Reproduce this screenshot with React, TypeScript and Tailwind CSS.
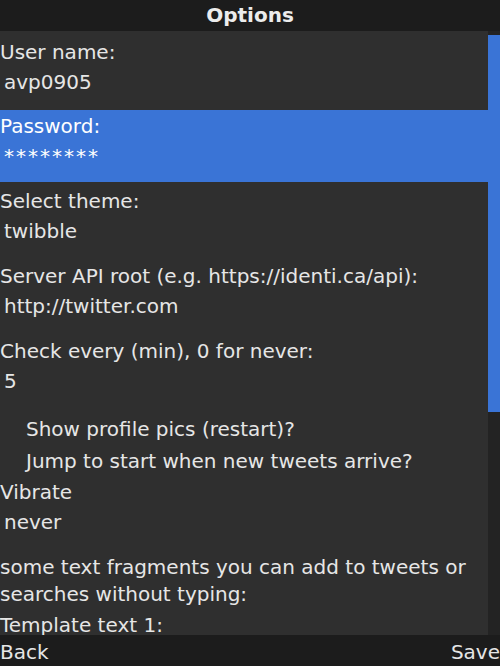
import React from 'react';

const labelCls = 'h-[30px] leading-[30px] whitespace-nowrap';
const valueCls = 'h-[30px] leading-[30px] pl-[4px] whitespace-nowrap';

function Field({ label, value, className = '', valueExtra = '' }: { label: string; value: string; className?: string; valueExtra?: string }) {
  return (
    <div className={className}>
      <div className={labelCls}>{label}</div>
      <div className={`${valueCls} ${valueExtra}`}>{value}</div>
    </div>
  );
}

export default function App() {
  return (
    <div
      className="w-[500px] h-[666px] flex flex-col overflow-hidden bg-[#2f2f2f] text-[#e6e6e6] text-[20px]"
      style={{ fontFamily: '"DejaVu Sans", Verdana, sans-serif' }}
    >
      {/* Title bar */}
      <div className="h-[31px] shrink-0 bg-[#1c1c1c] text-center font-bold text-[20px] leading-[31px] text-[#ececec]">
        Options
      </div>

      {/* Scrollable form */}
      <div className="flex-1 flex min-h-0">
        <div className="flex-1 overflow-hidden">
          <Field label="User name:" value="avp0905" className="pt-[6px] pb-[13px]" />
          <Field
            label="Password:"
            value="********"
            className="pt-[1px] pb-[11px] bg-[#3a74d6] text-white"
            valueExtra="tracking-[2px]"
          />
          <Field label="Select theme:" value="twibble" className="mt-[4px]" />
          <Field label="Server API root (e.g. https://identi.ca/api):" value="http://twitter.com" className="mt-[15px]" />
          <Field label="Check every (min), 0 for never:" value="5" className="mt-[15px]" />

          <div className="mt-[17px] pl-[26px]">
            <div className="h-[32px] leading-[32px] whitespace-nowrap">Show profile pics (restart)?</div>
            <div className="h-[32px] leading-[32px] whitespace-nowrap">Jump to start when new tweets arrive?</div>
          </div>

          <Field label="Vibrate" value="never" />

          <div className="mt-[17px] leading-[27px]">
            some text fragments you can add to tweets or searches without typing:
          </div>
          <div className={`mt-[2px] ${labelCls}`}>Template text 1:</div>
        </div>

        {/* Scrollbar */}
        <div className="w-[12px] shrink-0 bg-[#232323] pt-[4px]">
          <div className="h-[377px] bg-[#3a74d6]" />
        </div>
      </div>

      {/* Soft keys */}
      <div className="h-[31px] shrink-0 bg-[#1c1c1c] flex justify-between pt-[4px] leading-[27px] text-[#e6e6e6]">
        <span>Back</span>
        <span>Save</span>
      </div>
    </div>
  );
}
